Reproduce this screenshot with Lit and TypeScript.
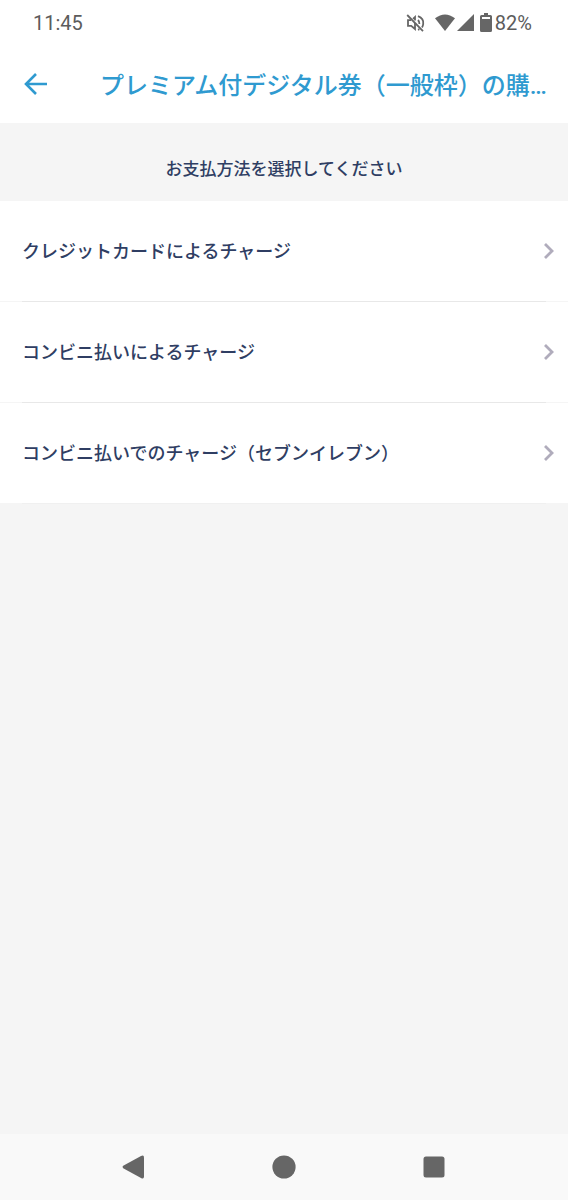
import { LitElement, html, css } from "lit";
import { customElement, property } from "lit/decorators.js";

@customElement("status-bar")
class StatusBar extends LitElement {
  static styles = css`
    :host {
      display: flex;
      align-items: center;
      justify-content: space-between;
      height: 45px;
      padding: 0 36px 0 33px;
      color: #5c5c5c;
      font: 400 20px/24px Roboto, sans-serif;
    }
    .icons {
      display: flex;
      align-items: center;
    }
    .mute { margin-right: 10px; }
    .signal { margin: 0 6px 0 2px; }
    .battery { margin-right: 3px; }
    svg { display: block; fill: #666; }
    .mute { fill: none; stroke: #666; stroke-width: 1.8; }
  `;
  render() {
    return html`
      <span>11:45</span>
      <span class="icons">
        <svg class="mute" width="19" height="20" viewBox="0 0 19 20">
          <path d="M1.2 2 L17 18.2" />
          <path d="M5 7.2 H2 V12.8 H5.2 L9 16 V10 M7 5.8 L9 4 V7.5" />
          <path d="M12 7 Q13.6 8.6 13.4 11 M12 3.2 Q18 5.5 17.2 11 Q17 13 16 14.4 M12 16.8 L13.4 16.2" />
        </svg>
        <svg width="20" height="17" viewBox="0 0 20 17">
          <path d="M0 4.2 Q10 -3.4 20 4.2 L10 17 Z" />
        </svg>
        <svg class="signal" width="17" height="17" viewBox="0 0 17 17">
          <path d="M17 0 V17 H0 Z" />
        </svg>
        <svg class="battery" width="12" height="19" viewBox="0 0 12 19">
          <path fill-rule="evenodd" d="M4 0 H8 V2 H10.5 Q12 2 12 3.5 V17.5 Q12 19 10.5 19 H1.5 Q0 19 0 17.5 V3.5 Q0 2 1.5 2 H4 Z M2 4 V6 H10 V4 Z" />
        </svg>
        <span>82%</span>
      </span>
    `;
  }
}

@customElement("method-row")
class MethodRow extends LitElement {
  @property() label = "";
  static styles = css`
    :host { display: block; }
    .row {
      box-sizing: border-box;
      display: flex;
      align-items: center;
      justify-content: space-between;
      width: 100%;
      height: 100px;
      padding: 0 14px 0 22px;
      border: 0;
      background: #fff;
      color: #2f3e63;
      font: 500 18px/26px Roboto, "Noto Sans CJK JP", sans-serif;
      text-align: left;
      cursor: pointer;
    }
    .label { padding-top: 2px; }
    .line {
      height: 1px;
      padding: 0 22px;
      background: #f5f5f5;
    }
    .line::before {
      content: "";
      display: block;
      height: 1px;
      background: #e8e8e8;
    }
    :host([last]) .line::before { background: #f0f0f0; }
    svg {
      flex: none;
      fill: none;
      stroke: #b0acbc;
      stroke-width: 2.8;
    }
  `;
  render() {
    return html`
      <button class="row" type="button">
        <span class="label">${this.label}</span>
        <svg width="10" height="16" viewBox="0 0 10 16" aria-hidden="true">
          <path d="M1 1 L8 8 L1 15" />
        </svg>
      </button>
      <div class="line"></div>
    `;
  }
}

@customElement("app-root")
class AppRoot extends LitElement {
  static styles = css`
    :host {
      display: flex;
      flex-direction: column;
      min-height: 100vh;
      background: #f5f5f5;
      color: #2f3e63;
      font-family: Roboto, "Noto Sans CJK JP", sans-serif;
    }
    .top { background: #fff; }
    .appbar {
      display: flex;
      align-items: center;
      gap: 52px;
      height: 78px;
      padding: 0 16px 0 24px;
    }
    button {
      border: 0;
      padding: 0;
      background: none;
      cursor: pointer;
    }
    svg { display: block; }
    .back svg {
      fill: none;
      stroke: #2f9ad0;
      stroke-width: 2.6;
    }
    h1 {
      flex: 1;
      min-width: 0;
      margin: 0;
      padding-top: 4px;
      overflow: hidden;
      color: #2f9ad0;
      font-size: 24px;
      font-weight: 500;
      line-height: 36px;
      white-space: nowrap;
      text-overflow: ellipsis;
    }
    main { flex: 1; }
    h2 {
      margin: 0;
      padding: 34px 16px 20px;
      font-size: 17px;
      font-weight: 500;
      line-height: 24px;
      text-align: center;
    }
    ul {
      margin: 0;
      padding: 0;
      list-style: none;
    }
    .nav {
      display: flex;
      align-items: center;
      justify-content: center;
      gap: 126px;
      height: 66px;
      background: #f9f9f9;
    }
    .nav svg { fill: #666; }
  `;
  render() {
    const methods = [
      "クレジットカードによるチャージ",
      "コンビニ払いによるチャージ",
      "コンビニ払いでのチャージ（セブンイレブン）",
    ];
    return html`
      <header class="top">
        <status-bar></status-bar>
        <div class="appbar">
          <button class="back" type="button" aria-label="戻る">
            <svg width="24" height="22" viewBox="0 0 24 22">
              <path d="M12 1 L2 11 L12 21 M2 11 H23" />
            </svg>
          </button>
          <h1>プレミアム付デジタル券（一般枠）の購…</h1>
        </div>
      </header>
      <main>
        <h2>お支払方法を選択してください</h2>
        <ul>
          ${methods.map(
            (m, i) => html`<li>
              <method-row .label=${m} ?last=${i === methods.length - 1}></method-row>
            </li>`
          )}
        </ul>
      </main>
      <nav class="nav">
        <button type="button" aria-label="戻る">
          <svg width="24" height="24" viewBox="0 0 24 24">
            <path d="M1.2 10.8 L19 1 Q22 -0.5 22 2.5 V21.5 Q22 24.5 19 23 L1.2 13.2 Q0 12 1.2 10.8 Z" />
          </svg>
        </button>
        <button type="button" aria-label="ホーム">
          <svg width="24" height="24" viewBox="0 0 24 24"><circle cx="12" cy="12" r="11.6" /></svg>
        </button>
        <button type="button" aria-label="履歴">
          <svg width="24" height="24" viewBox="0 0 24 24"><rect x="1.5" y="1.5" width="21" height="21" rx="2.5" /></svg>
        </button>
      </nav>
    `;
  }
}
